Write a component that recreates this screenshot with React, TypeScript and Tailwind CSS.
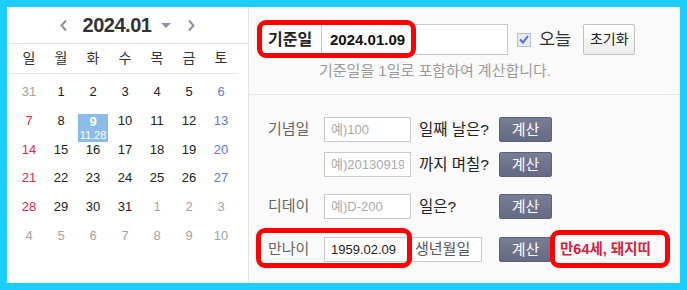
import React from 'react';

type Day = { d: number; kind: 'prev' | 'next' | 'cur'; lunar?: string; active?: boolean };

const weeks: Day[][] = [
  [{ d: 31, kind: 'prev' }, ...[1, 2, 3, 4, 5, 6].map((d) => ({ d, kind: 'cur' as const }))],
  [7, 8, 9, 10, 11, 12, 13].map((d) => (d === 9 ? { d, kind: 'cur' as const, lunar: '11.28', active: true } : { d, kind: 'cur' as const })),
  [14, 15, 16, 17, 18, 19, 20].map((d) => ({ d, kind: 'cur' as const })),
  [21, 22, 23, 24, 25, 26, 27].map((d) => ({ d, kind: 'cur' as const })),
  [...[28, 29, 30, 31].map((d) => ({ d, kind: 'cur' as const })), ...[1, 2, 3].map((d) => ({ d, kind: 'next' as const }))],
  [4, 5, 6, 7, 8, 9, 10].map((d) => ({ d, kind: 'next' as const })),
];

const weekdays = ['일', '월', '화', '수', '목', '금', '토'];

function dayColor(day: Day, col: number) {
  if (day.kind !== 'cur') return 'text-[#a3a3a3]';
  if (col === 0) return 'text-[#e0284f]';
  if (col === 6) return 'text-[#6478d6]';
  return 'text-[#222]';
}

function Calendar() {
  return (
    <div className="w-[242px] h-full bg-white border-r border-[#e3e3e3]">
      {/* month header */}
      <div className="h-[37px] flex items-center justify-center border-b border-[#e6e6e6]">
        <svg width="9" height="13" viewBox="0 0 9 13" className="mt-[1px]">
          <path d="M7 1.5 L2.5 6.5 L7 11.5" fill="none" stroke="#8b90a3" strokeWidth="2" />
        </svg>
        <span className="ml-[15px] text-[20px] font-bold text-[#333] tracking-[-0.5px] leading-none">2024.01</span>
        <svg width="10" height="6" viewBox="0 0 10 6" className="ml-[10px] mt-[2px]">
          <path d="M0 0 L10 0 L5 5 Z" fill="#8b90a3" />
        </svg>
        <svg width="9" height="13" viewBox="0 0 9 13" className="ml-[16px] mt-[1px]">
          <path d="M2 1.5 L6.5 6.5 L2 11.5" fill="none" stroke="#8b90a3" strokeWidth="2" />
        </svg>
      </div>

      <div className="mr-[10px]">
        <div className="h-[30px] pl-[6px] grid grid-cols-[repeat(7,32px)] items-center border-b border-[#e6e6e6]">
          {weekdays.map((w) => (
            <div key={w} className="text-center text-[14px] text-[#333]">{w}</div>
          ))}
        </div>

        <div className="pt-[11px] pl-[6px]">
          {weeks.map((week, i) => (
            <div key={i} className="h-[28.8px] grid grid-cols-[repeat(7,32px)]">
              {week.map((day, j) =>
                day.active ? (
                  <div key={j} className="w-[30px] h-[28px] mx-auto bg-[#8bbbe8] flex flex-col items-center text-white">
                    <span className="text-[13px] font-bold leading-[14px] mt-[1px]">{day.d}</span>
                    <span className="text-[11px] leading-[13px]">{day.lunar}</span>
                  </div>
                ) : (
                  <div key={j} className={`text-center text-[13px] leading-[14px] ${dayColor(day, j)}`}>
                    {day.d}
                  </div>
                )
              )}
            </div>
          ))}
        </div>
      </div>
    </div>
  );
}

function CalcButton() {
  return (
    <button className="w-[53px] h-[25px] rounded-[2px] bg-gradient-to-b from-[#7a7d96] to-[#666983] border border-[#5d6079] text-white text-[15px] leading-none">
      계산
    </button>
  );
}

function SmallInput({ placeholder, value }: { placeholder?: string; value?: string }) {
  return (
    <input
      readOnly
      defaultValue={value}
      placeholder={placeholder}
      className="w-[87px] h-[25px] border border-[#c9c9c9] bg-white px-[6px] text-[13px] text-[#222] placeholder:text-[#aaa] outline-none"
    />
  );
}

function Calculator() {
  return (
    <div className="relative flex-1 h-full bg-[#fafafa] text-[#222]">
      {/* base date */}
      <div className="h-[88px] border-b border-[#e8e8e8]">
        <div className="pt-[17px] pl-[14px] flex items-center">
          <div className="w-[58px] h-[31px] bg-white flex items-center pl-[5px] text-[16px] font-bold text-[#222]">기준일</div>
          <input
            readOnly
            defaultValue="2024.01.09"
            className="w-[187px] h-[31px] border border-[#c8c8c8] bg-white pl-[8px] text-[15px] font-bold text-[#111] outline-none"
          />
          <div className="ml-[9px] w-[14px] h-[14px] border border-[#b8bcc8] bg-[#e8ebf3] flex items-center justify-center">
            <svg width="10" height="9" viewBox="0 0 10 9">
              <path d="M1 4.5 L4 7.5 L9 1" fill="none" stroke="#4f66de" strokeWidth="2" />
            </svg>
          </div>
          <span className="ml-[8px] text-[17.5px] text-[#333]">오늘</span>
          <button className="ml-[12px] w-[52px] h-[31px] rounded-[2px] border border-[#c2c2c2] bg-gradient-to-b from-white to-[#ededed] text-[14px] text-[#222]">
            초기화
          </button>
        </div>
        <div className="mt-[5px] pl-[70px] text-[15px] text-[#9a9a9a]">기준일을 1일로 포함하여 계산합니다.</div>
      </div>

      {/* calculators */}
      <div className="pt-[22px] pl-[19px]">
        <div className="flex items-center h-[25px]">
          <span className="w-[56px] text-[15px] text-[#666]">기념일</span>
          <SmallInput placeholder="예)100" />
          <span className="w-[88px] pl-[8px] text-[15.5px]">일째 날은?</span>
          <CalcButton />
        </div>
        <div className="flex items-center h-[25px] mt-[10px]">
          <span className="w-[56px]" />
          <SmallInput placeholder="예)20130919" />
          <span className="w-[88px] pl-[8px] text-[15.5px]">까지 며칠?</span>
          <CalcButton />
        </div>
        <div className="flex items-center h-[25px] mt-[17px]">
          <span className="w-[56px] text-[15px] text-[#666]">디데이</span>
          <SmallInput placeholder="예)D-200" />
          <span className="w-[88px] pl-[8px] text-[15.5px]">일은?</span>
          <CalcButton />
        </div>
        <div className="flex items-center h-[25px] mt-[18px]">
          <span className="w-[56px] text-[15px] text-[#666]">만나이</span>
          <SmallInput value="1959.02.09" />
          <div className="w-[88px]">
            <div className="w-[71px] h-[25px] border border-[#c9c9c9] bg-white flex items-center pl-[3px] text-[15px] text-[#555]">생년월일</div>
          </div>
          <CalcButton />
          <span className="ml-[8px] text-[14.5px] font-bold text-[#d4213f]">만64세, 돼지띠</span>
        </div>
      </div>

      {/* red annotation boxes */}
      <div className="absolute left-[8px] top-[13px] w-[159px] h-[38px] border-[5px] border-[#ff0000] rounded-[9px]" />
      <div className="absolute left-[7px] top-[221px] w-[156px] h-[40px] border-[5px] border-[#ff0000] rounded-[9px]" />
      <div className="absolute left-[301px] top-[223px] w-[120px] h-[38px] border-[5px] border-[#ff0000] rounded-[9px]" />
    </div>
  );
}

export default function App() {
  return (
    <div className="w-[687px] h-[290px] bg-[#1dcdfe] p-[7px]">
      <div className="flex h-[276px] font-['Liberation_Sans','Noto_Sans_CJK_KR',sans-serif]">
        <Calendar />
        <Calculator />
      </div>
    </div>
  );
}
